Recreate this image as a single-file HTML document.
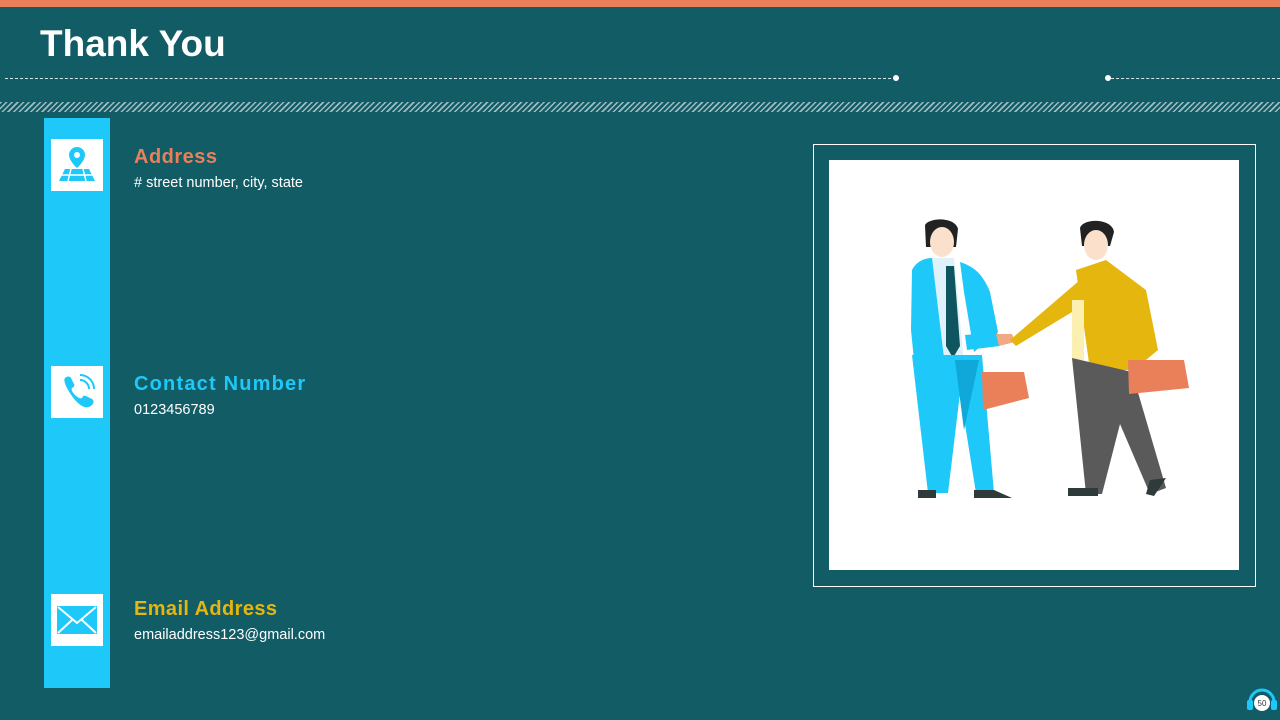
<!DOCTYPE html>
<html><head><meta charset="utf-8"><style>
*{margin:0;padding:0;box-sizing:border-box}
body{width:1280px;height:720px;background:#125c66;position:relative;overflow:hidden;font-family:"Liberation Sans",sans-serif}
.a{position:absolute}
h1{position:absolute;left:40px;top:23px;font-size:37px;color:#fff;font-weight:bold;letter-spacing:0}
.t{position:absolute;left:134px;font-size:20px;font-weight:bold;letter-spacing:0.5px}
.s{position:absolute;left:134px;font-size:14.5px;color:#fff}
.ib{position:absolute;left:51px;width:52px;height:52px;background:#fff}
</style></head><body>
<div class="a" style="left:0;top:0;width:1280px;height:7px;background:#e9805a"></div>
<h1>Thank You</h1>
<div class="a" style="left:5px;top:78px;width:891px;border-top:1px dashed #d8e6e8"></div>
<div class="a" style="left:893px;top:75px;width:6px;height:6px;border-radius:50%;background:#fff"></div>
<div class="a" style="left:1105px;top:75px;width:6px;height:6px;border-radius:50%;background:#fff"></div>
<div class="a" style="left:1111px;top:78px;width:169px;border-top:1px dashed #d8e6e8"></div>
<div class="a" style="left:0;top:102px;width:1280px;height:10px;background:repeating-linear-gradient(135deg,#9fbcc0 0 1.5px,#125c66 1.5px 4px)"></div>
<div class="a" style="left:44px;top:118px;width:66px;height:570px;background:#1ec8f8"></div>
<div class="ib" style="top:139px"><svg width="52" height="52" viewBox="0 0 52 52"><path d="M26 8a8 8 0 0 0-8 8c0 6 8 13 8 13s8-7 8-13a8 8 0 0 0-8-8z" fill="#1ec8f8"/><circle cx="26" cy="16" r="3" fill="#fff"/><path d="M14 30h24l6 12H8z" fill="#1ec8f8"/><path d="M8 36h36M20 30l-3 12M32 30l3 12" stroke="#fff" stroke-width="1.5"/></svg></div>
<div class="ib" style="top:366px"><svg width="52" height="52" viewBox="0 0 52 52"><path d="M14 12c2-2 5-2 6 0l3 6c1 2 0 3-2 4-1 1 0 4 3 7s6 4 7 3c1-2 2-3 4-2l6 3c2 1 2 4 0 6-3 3-8 4-15-3S11 15 14 12z" fill="#1ec8f8"/><path d="M29 14a9 9 0 0 1 9 9M29 9a14 14 0 0 1 14 14" stroke="#1ec8f8" stroke-width="2" fill="none"/></svg></div>
<div class="ib" style="top:594px"><svg width="52" height="52" viewBox="0 0 52 52"><rect x="6" y="12" width="40" height="28" fill="#1ec8f8"/><path d="M7 13l19 16 19-16M7 39l14-13M45 39L31 26" stroke="#fff" stroke-width="2" fill="none"/></svg></div>
<div class="t" style="top:146px;color:#e9805a">Address</div>
<div class="s" style="top:175px"># street number, city, state</div>
<div class="t" style="top:373px;color:#1ec8f8;letter-spacing:1.2px">Contact Number</div>
<div class="s" style="top:402px">0123456789</div>
<div class="t" style="top:598px;color:#e5b60e;letter-spacing:0.4px">Email Address</div>
<div class="s" style="top:627px">emailaddress123@gmail.com</div>
<div class="a" style="left:813px;top:144px;width:443px;height:443px;border:1px solid #fff"></div>
<div class="a" style="left:829px;top:160px;width:410px;height:410px;background:#fff"></div>
<svg class="a" style="left:0;top:0" width="1280" height="720">
<path d="M925 225c5-8 30-8 33 4l-2 18-30 0z" fill="#222"/>
<ellipse cx="942" cy="242" rx="12" ry="15" fill="#fbe0cc"/>
<path d="M930 258l24 0 10 105h-30z" fill="#dff1fa"/>
<path d="M946 266l8 0 6 80-7 12-7-12z" fill="#0f5560"/>
<path d="M912 270c5-10 15-12 20-12l12 100-30 2-3-30z" fill="#1ec8f8"/>
<path d="M960 262c12 4 22 10 30 30l8 40-24 20-10-60z" fill="#1ec8f8"/>
<path d="M965 335l32-3 3 14-33 4z" fill="#1ec8f8"/>
<path d="M912 355l70 0 12 138h-18l-16-100-12 100h-20z" fill="#1ec8f8"/>
<path d="M955 360l24 0-15 70z" fill="#0fa8d8"/>
<path d="M918 490h18v8h-18zM974 490h20l18 8h-38z" fill="#2f3a3a"/>
<path d="M982 372h42l5 26-46 12z" fill="#e9805a"/>
<path d="M996 334l16 0 3 8-16 4z" fill="#f2a882"/>
<path d="M1080 228c3-10 32-10 34 4l-4 14-28 0z" fill="#222"/>
<ellipse cx="1096" cy="245" rx="12" ry="15" fill="#fbe0cc"/>
<path d="M1076 270l30-10 40 30 12 60-24 20-44 0z" fill="#e5b60e"/>
<path d="M1080 280l-70 60 6 6 66-40z" fill="#e5b60e"/>
<path d="M1072 300l12 0 0 60-12 0z" fill="#fbf0b0"/>
<path d="M1072 358l60 14 34 116-16 6-30-70-18 70h-16z" fill="#5a5a5a"/>
<path d="M1068 488h30v8h-30zM1150 480l16-2-12 18-8-2z" fill="#2f3a3a"/>
<path d="M1128 360l56 0 5 28-60 6z" fill="#e9805a"/>
</svg>
<svg class="a" style="left:1244px;top:682px" width="36" height="38"><path d="M6 20a12 12 0 0 1 24 0" stroke="#1ec8f8" stroke-width="3" fill="none"/><rect x="3" y="18" width="6" height="10" rx="2" fill="#1ec8f8"/><rect x="27" y="18" width="6" height="10" rx="2" fill="#1ec8f8"/><circle cx="18" cy="21" r="8" fill="#fff"/><text x="18" y="24" font-size="8" text-anchor="middle" font-family="Liberation Sans" fill="#333">50</text></svg>
</body></html>
